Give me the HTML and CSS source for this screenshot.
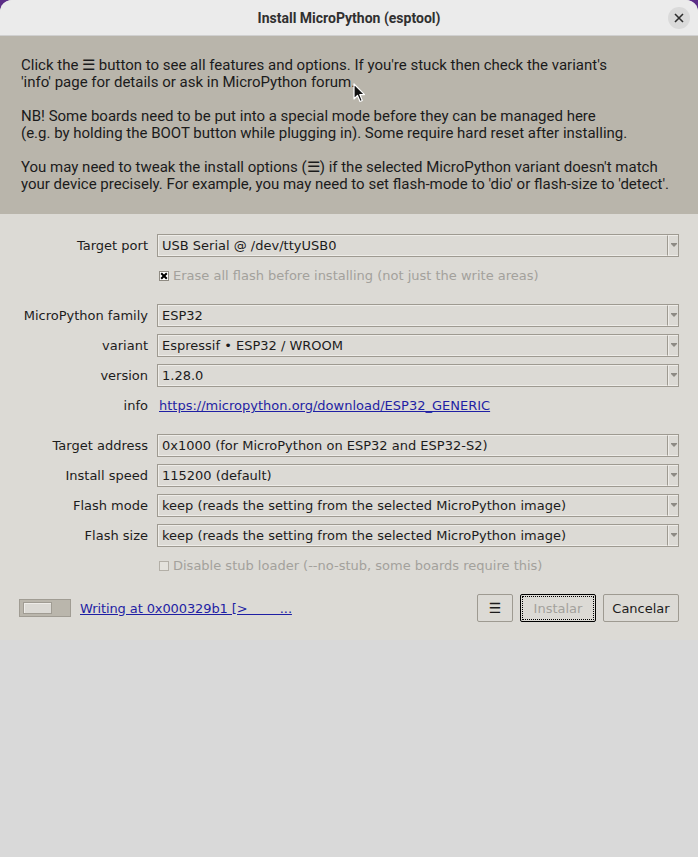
FILE: index.html
```html
<!DOCTYPE html>
<html lang="en">
<head>
  <meta charset="UTF-8">
  <meta name="viewport" content="width=device-width, initial-scale=1.0">
  <title>Install MicroPython (esptool)</title>
  <link rel="stylesheet" href="styles.css">
</head>
<body>
  <div class="window">
    <div class="titlebar">
      <span class="title">Install MicroPython (esptool)</span>
      <button class="close" type="button">
        <svg width="10" height="10" viewBox="0 0 10 10"><path d="M1 1L9 9M9 1L1 9" stroke="#2e2e2e" stroke-width="1.6" fill="none"/></svg>
      </button>
    </div>

    <div class="intro">
      <p>Click the &#9776; button to see all features and options. If you're stuck then check the variant's<br>'info' page for details or ask in MicroPython forum.</p>
      <p>NB! Some boards need to be put into a special mode before they can be managed here<br>(e.g. by holding the BOOT button while plugging in). Some require hard reset after installing.</p>
      <p>You may need to tweak the install options (&#9776;) if the selected MicroPython variant doesn't match<br>your device precisely. For example, you may need to set flash-mode to 'dio' or flash-size to 'detect'.</p>
      <!-- mouse pointer -->
      <svg class="pointer" width="13" height="20" viewBox="0 0 13 20">
        <path d="M1 1L1 16L4.5 12.5L7 18.5L9.3 17.5L6.8 11.6L11.5 11.6Z" fill="#111" stroke="#fff" stroke-width="1.2" stroke-linejoin="round"/>
      </svg>
    </div>

    <div class="panel">
      <div class="form">
        <div class="row">
          <label>Target port</label>
          <div class="combo"><span class="value">USB Serial @ /dev/ttyUSB0</span><span class="arrow"></span></div>
        </div>
        <div class="row">
          <span></span>
          <div class="check disabled">
            <svg width="10" height="10" viewBox="0 0 10 10"><rect x="0.5" y="0.5" width="9" height="9" fill="#fff" stroke="#8f8b83"/><path d="M2.2 2.2L7.8 7.8M7.8 2.2L2.2 7.8" stroke="#000" stroke-width="2"/></svg>
            <span>Erase all flash before installing (not just the write areas)</span>
          </div>
        </div>

        <div class="row sep">
          <label>MicroPython family</label>
          <div class="combo"><span class="value">ESP32</span><span class="arrow"></span></div>
        </div>
        <div class="row">
          <label>variant</label>
          <div class="combo"><span class="value">Espressif &bull; ESP32 / WROOM</span><span class="arrow"></span></div>
        </div>
        <div class="row">
          <label>version</label>
          <div class="combo"><span class="value">1.28.0</span><span class="arrow"></span></div>
        </div>
        <div class="row">
          <label>info</label>
          <a class="link info-link" href="#">https://micropython.org/download/ESP32_GENERIC</a>
        </div>

        <div class="row sep">
          <label>Target address</label>
          <div class="combo"><span class="value">0x1000 (for MicroPython on ESP32 and ESP32-S2)</span><span class="arrow"></span></div>
        </div>
        <div class="row">
          <label>Install speed</label>
          <div class="combo"><span class="value">115200 (default)</span><span class="arrow"></span></div>
        </div>
        <div class="row">
          <label>Flash mode</label>
          <div class="combo"><span class="value">keep (reads the setting from the selected MicroPython image)</span><span class="arrow"></span></div>
        </div>
        <div class="row">
          <label>Flash size</label>
          <div class="combo"><span class="value">keep (reads the setting from the selected MicroPython image)</span><span class="arrow"></span></div>
        </div>
        <div class="row">
          <span></span>
          <div class="check disabled">
            <svg width="10" height="10" viewBox="0 0 10 10"><rect x="0.5" y="0.5" width="9" height="9" fill="#e4e2dd" stroke="#b3afa7"/></svg>
            <span>Disable stub loader (--no-stub, some boards require this)</span>
          </div>
        </div>
      </div>

      <div class="actions">
        <div class="progress"><div class="progress-bar"></div></div>
        <a class="link status" href="#">Writing at 0x000329b1 [&gt;&nbsp;&nbsp;&nbsp;&nbsp;&nbsp;&nbsp;&nbsp;&nbsp;...</a>
        <div class="buttons">
          <button class="btn menu" type="button">&#9776;</button>
          <button class="btn default" type="button" disabled><span>Instalar</span></button>
          <button class="btn" type="button">Cancelar</button>
        </div>
      </div>
    </div>
  </div>
</body>
</html>
```

FILE: styles.css
```css
html, body {
  margin: 0;
  padding: 0;
  background-color: #5b2d86;
}

.window {
  min-height: 100vh;
  background-color: #d9d9d9;
  border-radius: 12px 12px 0 0;
  overflow: hidden;
}

/* title bar */
.titlebar {
  height: 36px;
  background-color: #ebebeb;
  border-bottom: 1px solid #d0d0d0;
  box-sizing: border-box;
  display: flex;
  align-items: center;
  justify-content: center;
  position: relative;
}

.title {
  font-family: Roboto, "Noto Sans", sans-serif;
  font-weight: bold;
  font-size: 14px;
  color: #303030;
}

.close {
  position: absolute;
  right: 8px;
  top: 7px;
  width: 22px;
  height: 22px;
  border: none;
  border-radius: 50%;
  background-color: #dadada;
  padding: 0;
  display: flex;
  align-items: center;
  justify-content: center;
}

/* explanation text */
.intro {
  position: relative;
  background-color: #b9b5ab;
  padding: 21px;
  font-family: Roboto, "Noto Sans", sans-serif;
  font-size: 15px;
  line-height: 17px;
  color: #1b1b1b;
}

.intro p {
  margin: 0 0 17px 0;
}

.intro p:last-of-type {
  margin-bottom: 0;
}

.pointer {
  position: absolute;
  left: 353px;
  top: 47px;
}

/* options */
.panel {
  background-color: #dcdad5;
  padding: 20px 19px 18px 19px;
  font-family: "DejaVu Sans", sans-serif;
  font-size: 13px;
  color: #1c1c1c;
}

.form {
  display: flex;
  flex-direction: column;
  gap: 7px;
}

.row {
  display: grid;
  grid-template-columns: 129px 1fr;
  column-gap: 9px;
  height: 23px;
  align-items: center;
}

.row.sep {
  margin-top: 10px;
}

.row label {
  text-align: right;
}

.combo {
  display: flex;
  height: 23px;
  box-sizing: border-box;
  border: 1px solid #9e9a91;
  background-color: #dcdad5;
}

.combo .value {
  flex: 1;
  padding-left: 3px;
  line-height: 19px;
  border: 1px solid #eeece8;
  border-right-color: #9e9a91;
  white-space: nowrap;
  overflow: hidden;
}

.combo .arrow {
  width: 9px;
  border: 1px solid #eeece8;
  border-right: none;
  display: flex;
  align-items: center;
  justify-content: center;
}

.combo .arrow::after {
  content: "";
  border-left: 3px solid transparent;
  border-right: 3px solid transparent;
  border-top: 3px solid #8d8a84;
  box-shadow: 0 -1px 0 #8d8a84;
}

.check {
  display: flex;
  align-items: center;
  gap: 4px;
  padding-left: 2px;
}

.check.disabled {
  color: #a3a19c;
}

.link {
  color: #1f1fa4;
  text-decoration: underline;
  white-space: pre;
}

.info-link {
  padding-left: 2px;
}

/* bottom row */
.actions {
  display: flex;
  align-items: center;
  margin-top: 17px;
  height: 28px;
}

.progress {
  width: 52px;
  height: 18px;
  box-sizing: border-box;
  border: 1px solid #a09c93;
  background-color: #bab6ac;
  padding: 2px 3px;
}

.progress-bar {
  width: 29px;
  height: 12px;
  box-sizing: border-box;
  border: 1px solid #a09c93;
  background-color: #dcdad5;
  box-shadow: inset 1px 1px 0 #eeece8;
}

.status {
  margin-left: 9px;
  letter-spacing: -0.1px;
}

.buttons {
  margin-left: auto;
  display: flex;
  gap: 7px;
}

.btn {
  height: 28px;
  width: 76px;
  box-sizing: border-box;
  border: 1px solid #9e9a91;
  border-radius: 2px;
  background-color: #dcdad5;
  font-family: "DejaVu Sans", sans-serif;
  font-size: 13px;
  color: #1c1c1c;
  padding: 0;
}

.btn.menu {
  width: 36px;
  font-size: 14px;
}

.btn.default {
  border-color: #000;
  padding: 1px;
}

.btn.default span {
  display: flex;
  height: 100%;
  align-items: center;
  justify-content: center;
  border: 1px dotted #000;
  box-sizing: border-box;
  color: #a3a19c;
}
```
